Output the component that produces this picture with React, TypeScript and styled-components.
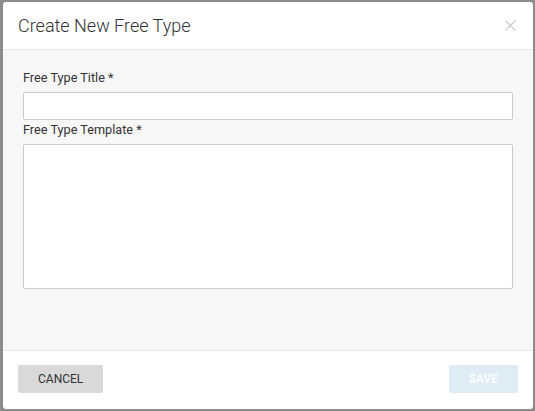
import React from 'react';
import styled, { createGlobalStyle } from 'styled-components';

const GlobalStyle = createGlobalStyle`
    html, body {
        margin: 0;
        padding: 0;
        background: #8c8c8c;
        font-family: Roboto, "Liberation Sans", sans-serif;
    }
`;

const Modal = styled.div`
    margin: 2px 0 0 3px;
    width: 530px;
    height: 407px;
    background: #fff;
    border-radius: 3px;
    display: flex;
    flex-direction: column;
    overflow: hidden;
`;

const Header = styled.div`
    display: flex;
    flex-direction: row;
    align-items: center;
    height: 47px;
    padding: 0 17px 0 15px;
    border-bottom: 1px solid #e5e5e5;
`;

const Title = styled.div`
    flex: 1;
    font-size: 18px;
    font-weight: 300;
    color: #333;
    padding-bottom: 1px;
`;

const CloseButton = styled.button`
    border: none;
    background: none;
    padding: 0;
    width: 12px;
    height: 12px;
    display: flex;
    align-items: center;
    justify-content: center;
    cursor: pointer;
`;

const Body = styled.div`
    flex: 1;
    background: #f7f7f7;
    padding: 19px 20px 0 20px;
`;

const Label = styled.label`
    display: block;
    font-size: 12.7px;
    line-height: 18px;
    color: #333;
    margin-bottom: 5px;
`;

const TextInput = styled.input`
    display: block;
    box-sizing: border-box;
    width: 490px;
    height: 28px;
    border: 1px solid #ccc;
    border-radius: 2px;
    background: #fff;
    margin: 0 0 1px 0;
`;

const TextArea = styled.textarea`
    display: block;
    box-sizing: border-box;
    width: 490px;
    height: 145px;
    border: 1px solid #ccc;
    border-radius: 2px;
    background: #fff;
    resize: none;
    margin: 0;
`;

const Footer = styled.div`
    display: flex;
    flex-direction: row;
    justify-content: space-between;
    align-items: flex-start;
    height: 59px;
    box-sizing: border-box;
    padding: 14px 15px 0 15px;
    border-top: 1px solid #e5e5e5;
`;

const Button = styled.button<{ variant: 'default' | 'primary' }>`
    height: 28px;
    padding: 0 20px;
    border: none;
    border-radius: 2px;
    font-family: Roboto, "Liberation Sans", sans-serif;
    font-size: 12px;
    text-transform: uppercase;
    background: ${props => props.variant === 'primary' ? '#deedf5' : '#d9d9d9'};
    color: ${props => props.variant === 'primary' ? '#fff' : '#333'};
    font-weight: ${props => props.variant === 'primary' ? 500 : 400};
`;

export default function App() {
    return (
        <>
            <GlobalStyle />
            <Modal>
                <Header>
                    <Title>Create New Free Type</Title>
                    <CloseButton aria-label="Close">
                        <svg width="11" height="11" viewBox="0 0 11 11">
                            <path d="M0.5 0.5L10.5 10.5M10.5 0.5L0.5 10.5" stroke="#cfcfcf" strokeWidth="1.4" />
                        </svg>
                    </CloseButton>
                </Header>

                <Body>
                    <Label>Free Type Title *</Label>
                    <TextInput type="text" />
                    <Label>Free Type Template *</Label>
                    <TextArea />
                </Body>

                <Footer>
                    <Button variant="default">Cancel</Button>
                    <Button variant="primary">Save</Button>
                </Footer>
            </Modal>
        </>
    );
}
